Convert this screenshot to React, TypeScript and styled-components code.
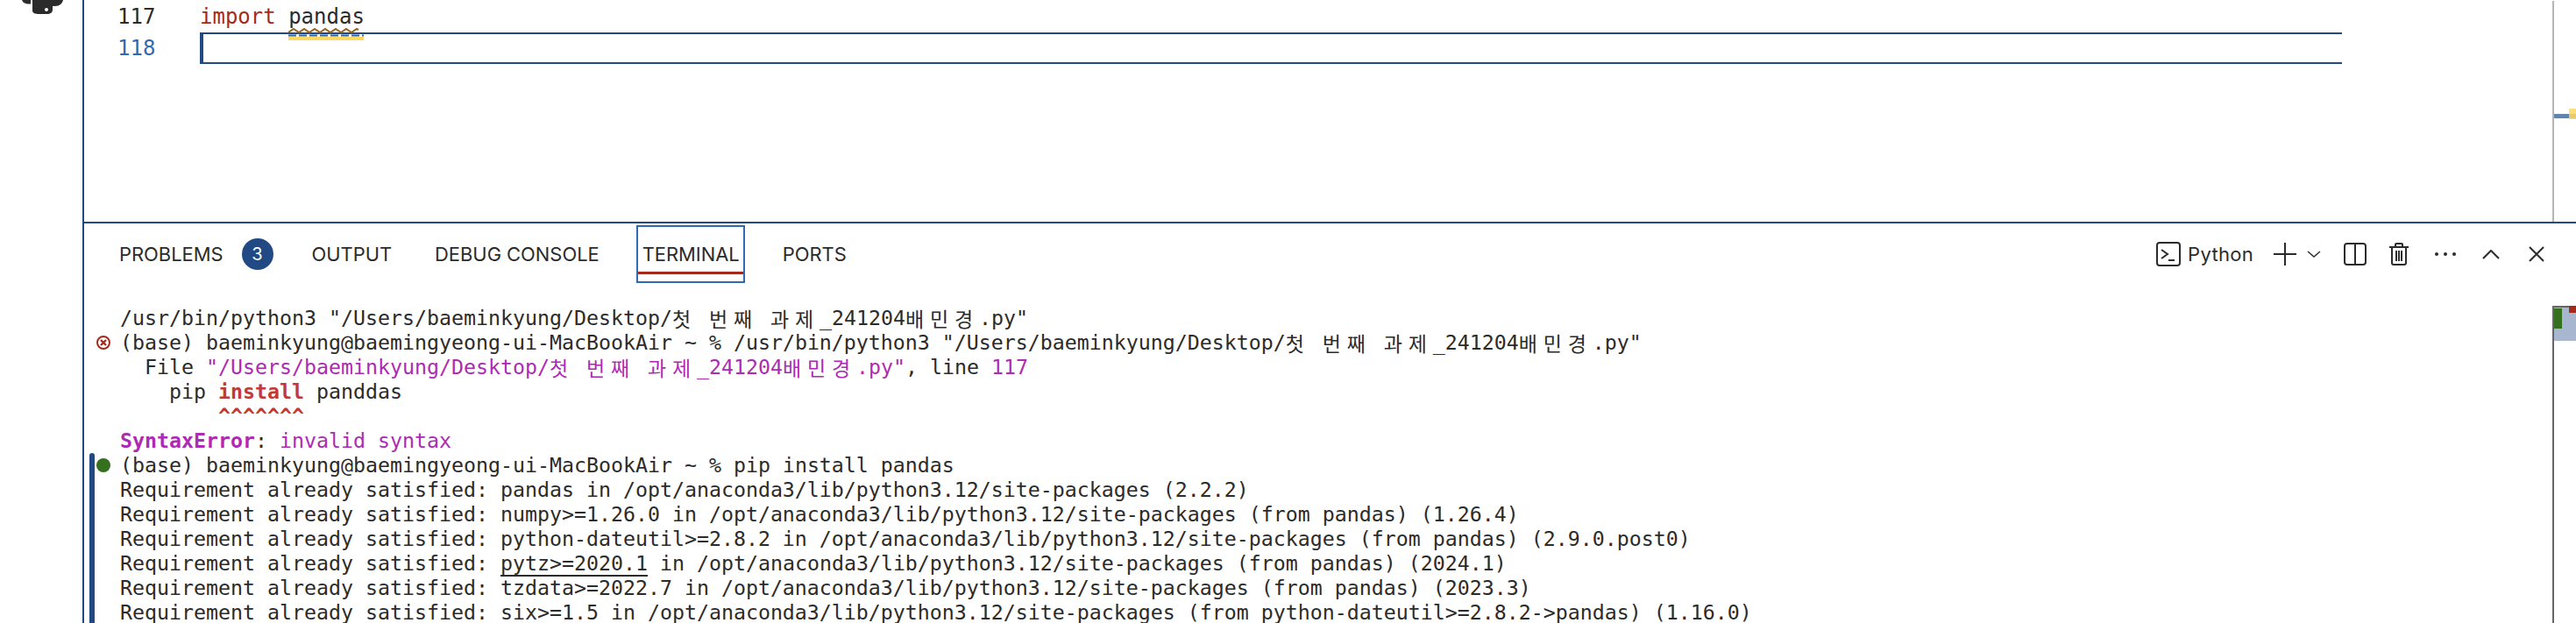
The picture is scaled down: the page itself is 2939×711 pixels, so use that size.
import React from 'react'
import styled, { createGlobalStyle } from 'styled-components'

const navy = '#214a85'
const ink = '#2b2b2b'
const purple = '#ad2ab5'
const brick = '#a52a1a'

const GlobalStyle = createGlobalStyle`
  html, body {
    margin: 0;
    padding: 0;
    background: #fff;
  }
`

const Shell = styled.div`
  display: flex;
  width: 2939px;
  height: 711px;
  overflow: hidden;
  background: #fff;
  color: ${ink};
`

const ActivityBar = styled.div`
  flex: 0 0 94px;
  overflow: hidden;
  padding-left: 25px;
  box-sizing: border-box;
  svg {
    display: block;
  }
`

const Main = styled.div`
  flex: 1;
  min-width: 0;
  display: flex;
  flex-direction: column;
  border-left: 2px solid ${navy};
`

const Editor = styled.div`
  flex: 0 0 253px;
  display: flex;
  padding-top: 1px;
  box-sizing: border-box;
`

const EditorBody = styled.div`
  flex: 1;
  min-width: 0;
`

const EditorLine = styled.div`
  display: flex;
  height: 36px;
  font: 24px/36px 'DejaVu Sans Mono', monospace;
  white-space: pre;
`

const LineNumber = styled.div<{ $current?: boolean }>`
  flex: 0 0 96px;
  padding-left: 38px;
  box-sizing: border-box;
  margin-right: 36px;
  width: 96px;
  color: ${p => (p.$current ? '#2f6ab5' : ink)};
`

const Keyword = styled.span`
  color: ${brick};
`

const Squiggled = styled.span`
  position: relative;
  display: inline-block;
  svg {
    position: absolute;
    left: 0;
    top: 30px;
    z-index: 2;
  }
`

const CurrentLine = styled.div`
  flex: 0 0 2444px;
  box-sizing: border-box;
  height: 36px;
  border-top: 2px solid ${navy};
  border-bottom: 2px solid ${navy};
  border-left: 4px solid ${navy};
`

const Ruler = styled.div`
  position: relative;
  flex: 0 0 27px;
  box-sizing: border-box;
  border-left: 2px solid #b5b5b5;
`

const RulerBar = styled.div`
  position: absolute;
  left: 0;
  right: 0;
  top: 129px;
  height: 5px;
  background: #6483ab;
`

const RulerWarn = styled.div`
  position: absolute;
  right: 0;
  top: 123px;
  width: 8px;
  height: 12px;
  background: rgba(251, 216, 96, 0.85);
`

const Panel = styled.div`
  flex: 1;
  min-height: 0;
  display: flex;
  flex-direction: column;
  border-top: 2px solid ${navy};
`

const TabBar = styled.div`
  display: flex;
  align-items: center;
  gap: 36px;
  height: 66px;
  margin-top: 2px;
  padding-left: 33.5px;
  font: 400 21.9px 'Inter', sans-serif;
  flex: 0 0 66px;
`

const Tab = styled.div<{ $active?: boolean }>`
  position: relative;
  display: flex;
  align-items: center;
  height: 66px;
  box-sizing: border-box;
  padding: 0 4.5px;
  border: 2px solid ${p => (p.$active ? '#2f6ab5' : 'transparent')};
  &::after {
    content: '';
    display: ${p => (p.$active ? 'block' : 'none')};
    position: absolute;
    left: 0;
    right: 0;
    bottom: 8px;
    height: 3px;
    background: ${brick};
  }
`

const Badge = styled.span`
  display: flex;
  align-items: center;
  justify-content: center;
  width: 36px;
  height: 36px;
  margin: 0 -5px 0 21px;
  border-radius: 50%;
  background: ${navy};
  color: #fff;
  font-size: 20px;
`

const Toolbar = styled.div`
  display: flex;
  align-items: center;
  margin-left: auto;
  padding-right: 36px;
  height: 66px;
`

const ProfileName = styled.span`
  margin: 0 23px 0 8px;
  font-size: 22px;
  letter-spacing: 0.3px;
`

const ToolIcon = styled.svg<{ $gap?: number }>`
  display: block;
  flex: none;
  margin-left: ${p => p.$gap ?? 0}px;
  fill: none;
  stroke: ${ink};
  stroke-width: 2;
`

const PanelBody = styled.div`
  flex: 1;
  min-height: 0;
  display: flex;
  margin-top: 26px;
`

const Rows = styled.div`
  flex: 1;
  min-width: 0;
  font: 23.25px/28px 'DejaVu Sans Mono', 'Noto Sans CJK KR', monospace;
  white-space: pre;
`

const Row = styled.div`
  display: flex;
  height: 28px;
`

const RowGutter = styled.div`
  flex: 0 0 41px;
  display: flex;
  align-items: center;
  gap: 2px;
  padding-left: 6px;
  box-sizing: border-box;
  position: relative;
`

const CommandBar = styled.div<{ $first?: boolean }>`
  flex: 0 0 6px;
  align-self: stretch;
  background: ${navy};
  border-radius: ${p => (p.$first ? '3px 3px 0 0' : '0')};
`

const Spacer = styled.div`
  flex: 0 0 6px;
`

const SuccessDot = styled.div`
  flex: 0 0 16px;
  height: 16px;
  border-radius: 50%;
  background: #34701d;
`

const Purple = styled.span<{ $bold?: boolean }>`
  color: ${purple};
  font-weight: ${p => (p.$bold ? 700 : 400)};
`

const ErrorWord = styled.span`
  color: #c23a36;
  font-weight: 700;
`

const Link = styled.span`
  border-bottom: 2px solid ${ink};
`

const Ko = styled.span<{ $cells: number }>`
  display: inline-block;
  width: ${p => p.$cells * 14}px;
  font-family: 'Noto Sans CJK KR', sans-serif;
  font-size: 23px;
  line-height: 28px;
  vertical-align: top;
`

const TermRuler = styled.div`
  position: relative;
  flex: 0 0 27px;
  box-sizing: border-box;
  border-left: 2px solid #666;
`

const Thumb = styled.div`
  height: 38px;
  background: #a8b6cf;
  border-top: 2px solid #666;
`

const RulerMark = styled.div<{ $kind: 'ok' | 'error' }>`
  position: absolute;
  background: ${p => (p.$kind === 'ok' ? '#34701d' : brick)};
  width: ${p => (p.$kind === 'ok' ? 9 : 8)}px;
  height: ${p => (p.$kind === 'ok' ? 23 : 8)}px;
  top: ${p => (p.$kind === 'ok' ? 3 : 0)}px;
  ${p => (p.$kind === 'ok' ? 'left: 0;' : 'right: 0;')}
`

const FileName = () => (
  <>
    {'/Users/baeminkyung/Desktop/'}
    <Ko $cells={3}>첫</Ko>
    <Ko $cells={2}>번</Ko>
    <Ko $cells={3}>째</Ko>
    <Ko $cells={2}>과</Ko>
    <Ko $cells={2}>제</Ko>
    {'_241204'}
    <Ko $cells={2}>배</Ko>
    <Ko $cells={2}>민</Ko>
    <Ko $cells={2}>경</Ko>
    {'.py'}
  </>
)

const prompt = '(base) baeminkyung@baemingyeong-ui-MacBookAir ~ % '
const satisfied = 'Requirement already satisfied: '
const sitePackages = '/opt/anaconda3/lib/python3.12/site-packages'

const TerminalRow = ({ mark, children }: { mark?: 'error' | 'ok' | 'bar'; children?: React.ReactNode }) => (
  <Row>
    <RowGutter>
      {mark === 'ok' || mark === 'bar' ? <CommandBar $first={mark === 'ok'} /> : <Spacer />}
      {mark === 'ok' && <SuccessDot />}
      {mark === 'error' && (
        <svg width="16" height="16" viewBox="0 0 16 16" fill="none" stroke={brick} strokeWidth="2">
          <circle cx="8" cy="8" r="7" />
          <path d="M5 5l6 6M11 5l-6 6" strokeWidth="2.4" />
        </svg>
      )}
    </RowGutter>
    <div>{children}</div>
  </Row>
)

export default function App() {
  return (
    <Shell>
      <GlobalStyle />
      <ActivityBar>
        {/* bottom of the python logo, the rest is scrolled off */}
        <svg width="48" height="17" viewBox="0 0 48 17" fill={ink}>
          <path d="M0 0C1 3 4 5 10 4.5V0Z" />
          <path
            fillRule="evenodd"
            d="M12 0V12C12 15 15 16 20 16H28C33 16 35 14 35 11V7H38C43 7 46 4 47 0ZM28 9a2 2 0 1 0 .01 0Z"
          />
        </svg>
      </ActivityBar>
      <Main>
        <Editor>
          <EditorBody>
            <EditorLine>
              <LineNumber>117</LineNumber>
              <div>
                <Keyword>import</Keyword>{' '}
                <Squiggled>
                  pandas
                  <svg width="86" height="16" viewBox="0 0 86 16" fill="none">
                    <path
                      d="M0 6l6-4 6 4 6-4 6 4 6-4 6 4 6-4 6 4 6-4 6 4 6-4 6 4 6-4 2 1"
                      stroke="#96641e"
                      strokeWidth="2"
                    />
                    <rect y="11" width="86" height="4" fill="#fbd860" />
                    <path d="M0 9.5h86" stroke="#2c5e9f" strokeWidth="2" strokeDasharray="9 3" />
                  </svg>
                </Squiggled>
              </div>
            </EditorLine>
            <EditorLine>
              <LineNumber $current>118</LineNumber>
              <CurrentLine />
            </EditorLine>
          </EditorBody>
          <Ruler>
            <RulerBar />
            <RulerWarn />
          </Ruler>
        </Editor>
        <Panel>
          <TabBar>
            <Tab>
              PROBLEMS
              <Badge>3</Badge>
            </Tab>
            <Tab>OUTPUT</Tab>
            <Tab>DEBUG CONSOLE</Tab>
            <Tab $active>TERMINAL</Tab>
            <Tab>PORTS</Tab>
            <Toolbar>
              <ToolIcon width="28" height="28" viewBox="0 0 28 28">
                <rect x="1" y="1" width="26" height="26" rx="3" />
                <path d="M6 9l7 5-7 5M14 21h7" />
              </ToolIcon>
              <ProfileName>Python</ProfileName>
              <ToolIcon width="26" height="26" viewBox="0 0 26 26">
                <path d="M0 13h26M13 0v26" />
              </ToolIcon>
              <ToolIcon $gap={12} width="16" height="8" viewBox="0 0 16 8" style={{ strokeWidth: 1.4 }}>
                <path d="M1 1l7 6 7-6" />
              </ToolIcon>
              <ToolIcon $gap={26} width="26" height="26" viewBox="0 0 26 26">
                <rect x="1" y="1" width="24" height="24" rx="3" />
                <path d="M13 1v24" />
              </ToolIcon>
              <ToolIcon $gap={26} width="22" height="26" viewBox="0 0 22 26">
                <path d="M0 5h22M3 5v18a2 2 0 0 0 2 2h12a2 2 0 0 0 2-2V5M7 5V2a1 1 0 0 1 1-1h6a1 1 0 0 1 1 1v3M8 9v12M11 9v12M14 9v12" />
              </ToolIcon>
              <ToolIcon $gap={30} width="24" height="6" viewBox="0 0 24 6" style={{ fill: ink, stroke: 'none' }}>
                <circle cx="2" cy="3" r="2" />
                <circle cx="12" cy="3" r="2" />
                <circle cx="22" cy="3" r="2" />
              </ToolIcon>
              <ToolIcon $gap={30} width="20" height="11" viewBox="0 0 20 11">
                <path d="M1 10l9-9 9 9" />
              </ToolIcon>
              <ToolIcon $gap={33} width="18" height="18" viewBox="0 0 18 18">
                <path d="M1 1l16 16M17 1L1 17" />
              </ToolIcon>
            </Toolbar>
          </TabBar>
          <PanelBody>
            <Rows>
              <TerminalRow>
                {'/usr/bin/python3 "'}
                <FileName />
                {'"'}
              </TerminalRow>
              <TerminalRow mark="error">
                {prompt}
                {'/usr/bin/python3 "'}
                <FileName />
                {'"'}
              </TerminalRow>
              <TerminalRow>
                {'  File '}
                <Purple>
                  {'"'}
                  <FileName />
                  {'"'}
                </Purple>
                {', line '}
                <Purple>117</Purple>
              </TerminalRow>
              <TerminalRow>
                {'    pip '}
                <ErrorWord>install</ErrorWord>
                {' panddas'}
              </TerminalRow>
              <TerminalRow>
                {'        '}
                <ErrorWord>^^^^^^^</ErrorWord>
              </TerminalRow>
              <TerminalRow>
                <Purple $bold>SyntaxError</Purple>
                {': '}
                <Purple>invalid syntax</Purple>
              </TerminalRow>
              <TerminalRow mark="ok">
                {prompt}
                {'pip install pandas'}
              </TerminalRow>
              <TerminalRow mark="bar">{`${satisfied}pandas in ${sitePackages} (2.2.2)`}</TerminalRow>
              <TerminalRow mark="bar">{`${satisfied}numpy>=1.26.0 in ${sitePackages} (from pandas) (1.26.4)`}</TerminalRow>
              <TerminalRow mark="bar">{`${satisfied}python-dateutil>=2.8.2 in ${sitePackages} (from pandas) (2.9.0.post0)`}</TerminalRow>
              <TerminalRow mark="bar">
                {satisfied}
                <Link>pytz&gt;=2020.1</Link>
                {` in ${sitePackages} (from pandas) (2024.1)`}
              </TerminalRow>
              <TerminalRow mark="bar">{`${satisfied}tzdata>=2022.7 in ${sitePackages} (from pandas) (2023.3)`}</TerminalRow>
              <TerminalRow mark="bar">{`${satisfied}six>=1.5 in ${sitePackages} (from python-dateutil>=2.8.2->pandas) (1.16.0)`}</TerminalRow>
            </Rows>
            <TermRuler>
              <Thumb />
              <RulerMark $kind="ok" />
              <RulerMark $kind="error" />
            </TermRuler>
          </PanelBody>
        </Panel>
      </Main>
    </Shell>
  )
}
